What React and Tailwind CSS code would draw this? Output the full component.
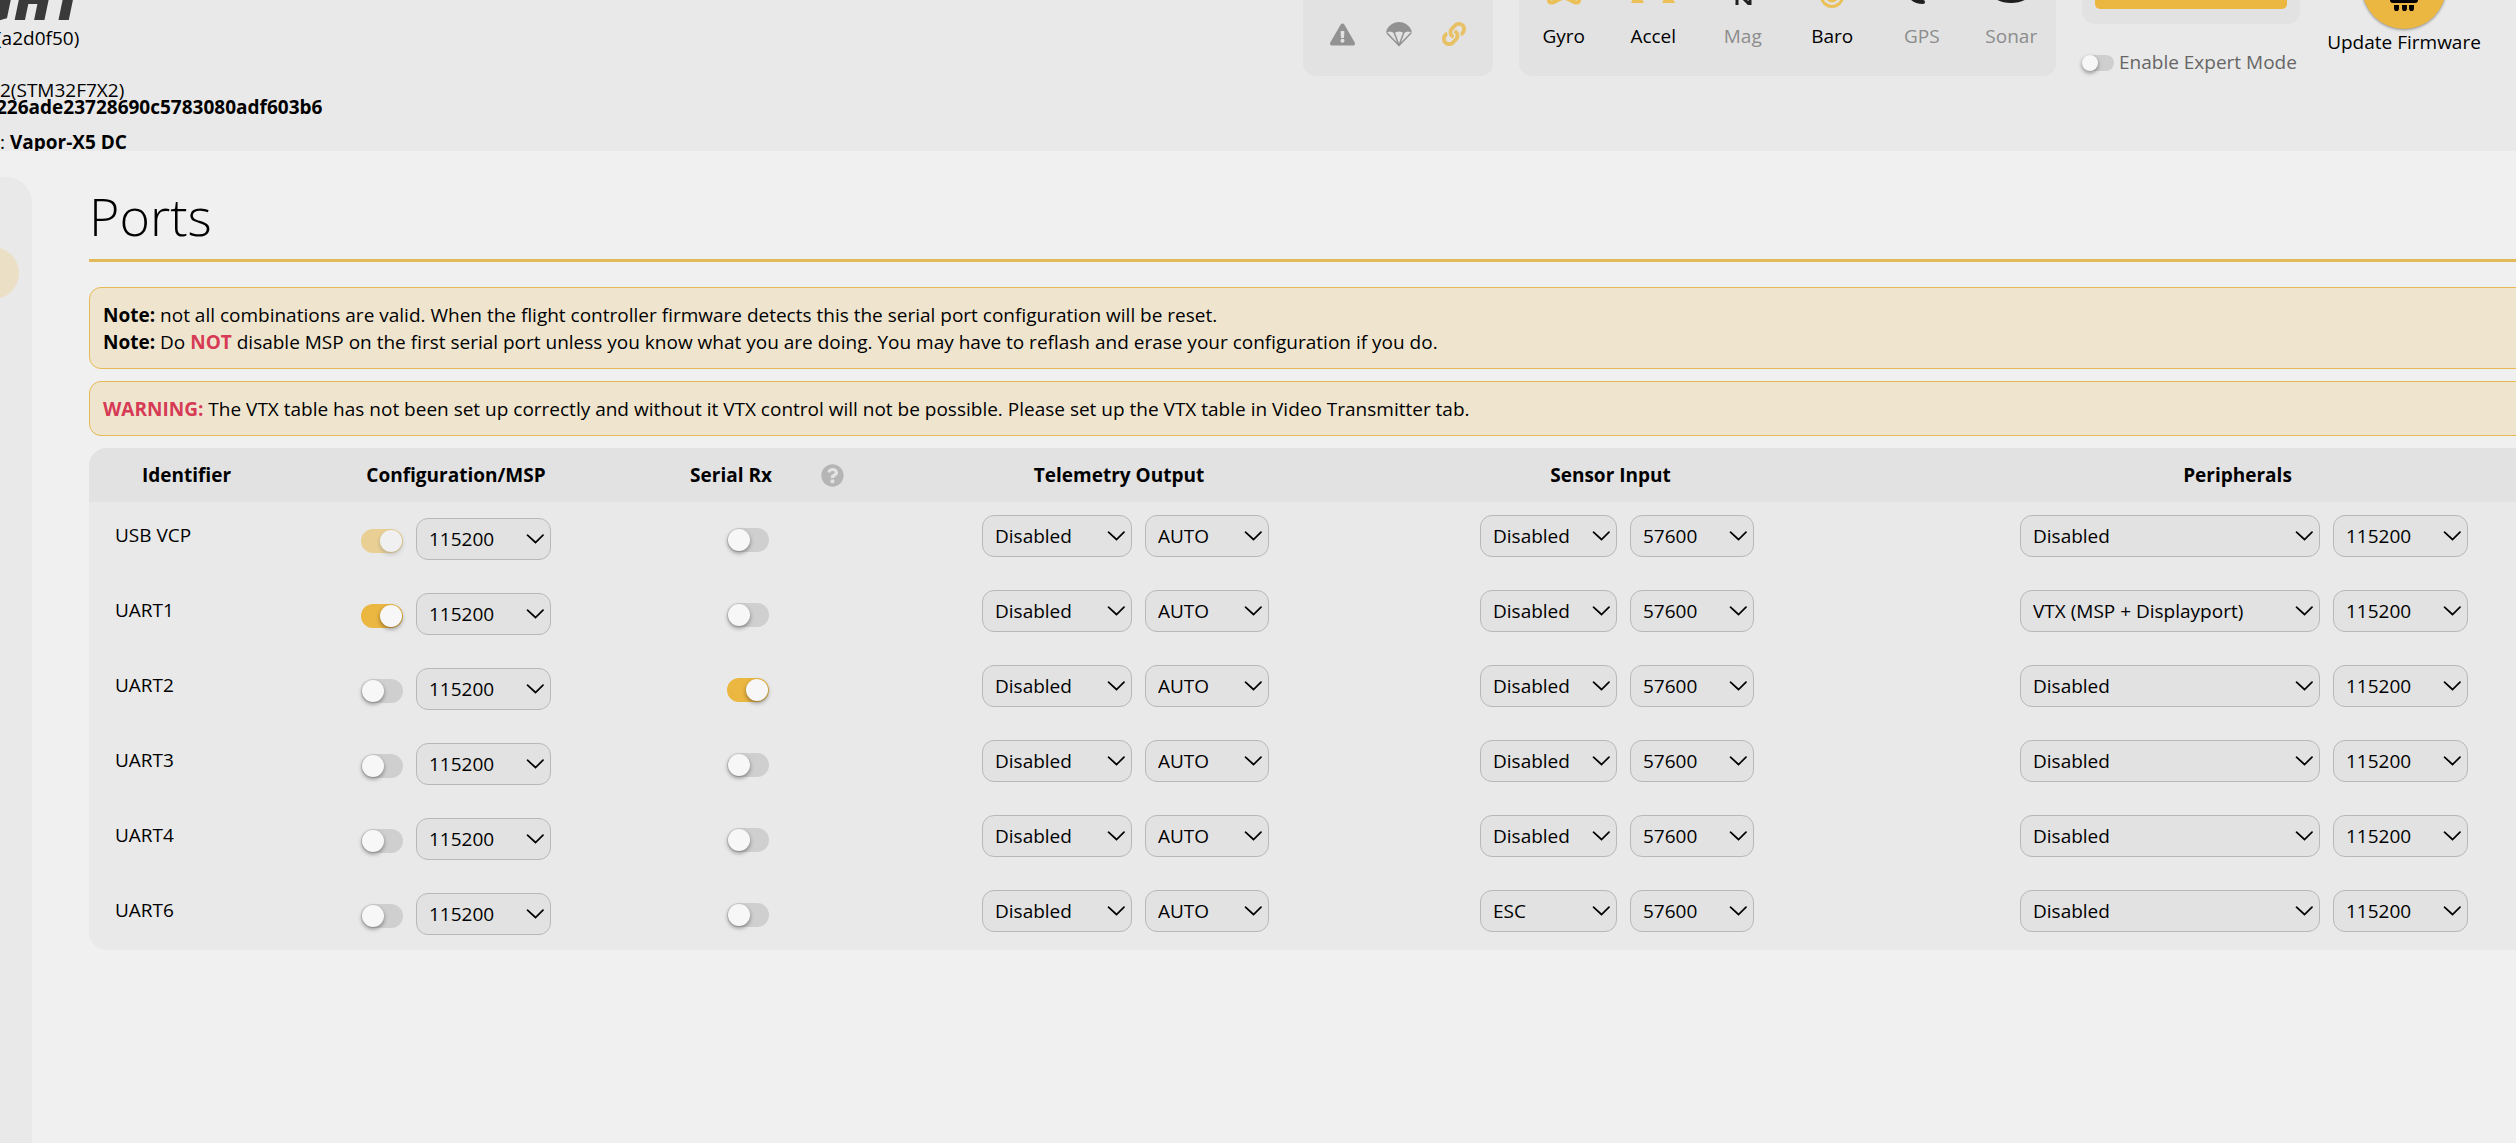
import React from 'react';
import { FaExclamationTriangle, FaLink, FaQuestionCircle } from 'react-icons/fa';

const sensors = [
  { name: 'Gyro', on: true, icon: <g fill="none" stroke="#ebc056" strokeWidth="4" strokeLinecap="round"><path d="M7 -1 Q6 4 12 2 L22 -3" /><path d="M37 -1 Q38 4 32 2 L22 -3" /></g> },
  { name: 'Accel', on: true, icon: <g fill="#ebc056"><path d="M0 3 L3 -3 H10 L13 3 Z" /><path d="M31 3 L34 -3 H41 L44 3 Z" /></g> },
  { name: 'Mag', on: false, icon: <path d="M16 5 V-9 M15 -9 L28 4 M29 5 V-14" fill="none" stroke="#1f1f1f" strokeWidth="3" /> },
  { name: 'Baro', on: true, icon: <g fill="none" stroke="#ebc056" strokeWidth="3"><circle cx="22" cy="-4" r="10.5" /><circle cx="22" cy="-4" r="5" fill="#ebc056" /></g> },
  { name: 'GPS', on: false, icon: <path d="M11 -3 Q15 2 23 2" fill="none" stroke="#1f1f1f" strokeWidth="4" strokeLinecap="round" /> },
  { name: 'Sonar', on: false, icon: <ellipse cx="22" cy="-8" rx="20" ry="11" fill="#1f1f1f" /> },
];

const ports = [
  { id: 'USB VCP', msp: true, locked: true },
  { id: 'UART1', msp: true, peripheral: 'VTX (MSP + Displayport)' },
  { id: 'UART2', rx: true },
  { id: 'UART3' },
  { id: 'UART4' },
  { id: 'UART6', sensor: 'ESC' },
];

const Select = ({ label, value, width }) => (
  <div className={`relative ${width}`}>
    <select
      aria-label={label}
      defaultValue={value}
      className="block h-[42px] w-full appearance-none rounded-xl border border-[#b8b8b8] bg-[#e2e2e2] pr-8 pl-3 leading-[27px]"
    >
      <option>{value}</option>
    </select>
    <svg className="pointer-events-none absolute top-4 right-[7px]" width="18" height="11" viewBox="0 0 18 11" fill="none" stroke="black" strokeWidth="1.7" strokeLinecap="round">
      <path d="M1.5 1.2 L9.5 8.5 L17 1.2" />
    </svg>
  </div>
);

const Toggle = ({ label, on, disabled }) => (
  <input
    type="checkbox"
    aria-label={label}
    defaultChecked={on}
    disabled={disabled}
    className="block h-6 w-[42px] shrink-0 appearance-none rounded-full bg-[#cfcfcf] p-px before:block before:size-[22px] before:rounded-full before:bg-[#f7f7f7] before:shadow-[0_2px_4px_rgba(0,0,0,0.4)] before:content-[''] checked:bg-[#ebb741] checked:before:ml-[18px] disabled:opacity-50"
  />
);

const Parachute = () => (
  <svg width="26" height="25" viewBox="0 0 26 25" fill="none" stroke="currentColor" strokeWidth="1.5">
    <path d="M0 11 C1 4 7 0 13 0 C19 0 25 4 26 11 Q22 8 18 11 Q13 8 8 11 Q4 8 0 11 Z" fill="currentColor" stroke="none" />
    <path d="M1 11 L13 23.5 L25 11 M8 10 L13 23.5 L18 10" strokeLinejoin="round" />
  </svg>
);

const Header = () => (
  <header className="flex h-[151px] overflow-hidden bg-[#e9e9e9]">
    <div className="flex-1 whitespace-nowrap leading-[17px]">
      <div className="-mt-7 -ml-6 h-[58px] text-[54px] leading-[54px] font-extrabold italic text-[#3a3a3a]">GHT</div>
      <p className="-ml-1">(a2d0f50)</p>
      <p className="mt-[35px]">2(STM32F7X2)</p>
      <p className="-ml-1 font-bold">226ade23728690c5783080adf603b6</p>
      <p className="mt-[18px]">: <b>Vapor-X5 DC</b></p>
    </div>

    <div className="flex items-start gap-[26px] pr-[34px]">
      <div className="flex h-[76px] w-[190px] justify-between rounded-b-[13px] bg-[#e2e2e2] px-[27px] pt-[22px] text-[#929292]">
        <FaExclamationTriangle size={25} />
        <Parachute />
        <FaLink size={24} color="#e8c066" />
      </div>

      <ul className="grid h-[76px] w-[537px] grid-cols-6 rounded-b-[13px] bg-[#e2e2e2]">
        {sensors.map((s) => (
          <li key={s.name} className={s.on ? 'flex flex-col items-center' : 'flex flex-col items-center text-[#8c8c8c]'}>
            <svg width="44" height="23" viewBox="0 0 44 23">{s.icon}</svg>
            <span className="leading-[27px]">{s.name}</span>
          </li>
        ))}
      </ul>

      <div className="w-[218px]">
        <div className="h-6 rounded-b-[13px] bg-[#e2e2e2] px-[13px]">
          <div className="h-[9px] rounded-b-[5px] bg-[#ebb741]" />
        </div>
        <label className="mt-[25px] flex items-center gap-[5px] whitespace-nowrap text-[#666]">
          <input
            type="checkbox"
            className="block h-4 w-8 appearance-none rounded-full bg-[#cfcfcf] before:block before:size-4 before:rounded-full before:bg-[#f7f7f7] before:shadow-[0_2px_4px_rgba(0,0,0,0.4)] before:content-['']"
          />
          Enable Expert Mode
        </label>
      </div>

      <button className="-mt-[55px] flex w-[156px] flex-col items-center whitespace-nowrap">
        <span className="flex size-[84px] items-end justify-center rounded-full bg-[#ebb741] pb-[18px] shadow-[0_1px_3px_rgba(0,0,0,0.4)]">
          <svg width="28" height="28" viewBox="0 0 28 28">
            <rect width="28" height="20" rx="3" />
            <path d="M4 22 h5 v4 l-1 2 h-3 l-1 -2 Z M12 22 h5 v4 l-1 2 h-3 l-1 -2 Z M19 22 h5 v4 l-1 2 h-3 l-1 -2 Z" />
          </svg>
        </span>
        Update Firmware
      </button>
    </div>
  </header>
);

const PortsTable = () => (
  <table className="w-full table-fixed overflow-hidden rounded-[18px] bg-[#e9e9e9]">
    <thead>
      <tr className="h-[54px] bg-[#e2e2e2]">
        <th className="w-[195px]">Identifier</th>
        <th className="w-[344px]">Configuration/MSP</th>
        <th className="w-[242px]">
          <div className="flex items-center pr-[26px] pl-[13px]">
            <span className="flex-1">Serial Rx</span>
            <FaQuestionCircle size={23} color="#b5b5b5" />
          </div>
        </th>
        <th className="w-[498px]">Telemetry Output</th>
        <th className="w-[485px]">Sensor Input</th>
        <th>Peripherals</th>
      </tr>
    </thead>
    <tbody>
      {ports.map((p) => (
        <tr key={p.id} className="h-[75px] align-top last:h-[73px]">
          <td className="pt-5 pl-[26px]">{p.id}</td>
          <td className="pt-4">
            <div className="flex items-center justify-center gap-[13px]">
              <div className="pt-1"><Toggle label={`${p.id} MSP`} on={p.msp} disabled={p.locked} /></div>
              <Select label={`${p.id} MSP speed`} value="115200" width="w-[135px]" />
            </div>
          </td>
          <td className="pt-[26px] pr-0.5">
            <div className="flex justify-center"><Toggle label={`${p.id} serial RX`} on={p.rx} /></div>
          </td>
          <td className="pt-[13px] pl-[13px]">
            <div className="flex justify-center gap-[13px]">
              <Select label={`${p.id} telemetry`} value="Disabled" width="w-[150px]" />
              <Select label={`${p.id} telemetry speed`} value="AUTO" width="w-[124px]" />
            </div>
          </td>
          <td className="pt-[13px] pl-[13px]">
            <div className="flex justify-center gap-[13px]">
              <Select label={`${p.id} sensor`} value={p.sensor || 'Disabled'} width="w-[137px]" />
              <Select label={`${p.id} sensor speed`} value="57600" width="w-[124px]" />
            </div>
          </td>
          <td className="pt-[13px] pl-[13px]">
            <div className="flex justify-center gap-[13px]">
              <Select label={`${p.id} peripheral`} value={p.peripheral || 'Disabled'} width="w-[300px]" />
              <Select label={`${p.id} peripheral speed`} value="115200" width="w-[135px]" />
            </div>
          </td>
        </tr>
      ))}
    </tbody>
  </table>
);

const note = 'rounded-xl border border-[#e5b954] bg-[#efe5cf] px-[13px] pt-[14px] pb-3';

const App = () => (
  <div className="flex min-h-screen flex-col overflow-hidden bg-[#f0f0f0] font-['Open_Sans',sans-serif] text-[19px] leading-[27px] text-black">
    <Header />
    <div className="flex flex-1 pt-[26px]">
      <nav className="w-8 shrink-0 rounded-tr-[26px] bg-[#e9e9e9] pt-[70px]">
        <a href="#ports" aria-label="Ports" className="-ml-[33px] block size-[52px] rounded-full bg-[#ebe0c6]" />
      </nav>
      {/* content runs past the right edge of the window */}
      <main className="-mr-[106px] ml-[57px] min-w-0 flex-1">
        <h1 className="border-b-[3px] border-[#e3b858] pb-1 text-[52px] leading-[78px] font-light">Ports</h1>
        <div className="mt-[25px] flex flex-col gap-3">
          <div className={note}>
            <p><b>Note:</b> not all combinations are valid. When the flight controller firmware detects this the serial port configuration will be reset.</p>
            <p><b>Note:</b> Do <b className="text-[#d63a54]">NOT</b> disable MSP on the first serial port unless you know what you are doing. You may have to reflash and erase your configuration if you do.</p>
          </div>
          <div className={note}>
            <p><b className="text-[#d63a54]">WARNING:</b> The VTX table has not been set up correctly and without it VTX control will not be possible. Please set up the VTX table in Video Transmitter tab.</p>
          </div>
          <PortsTable />
        </div>
      </main>
    </div>
  </div>
);

export default App;
